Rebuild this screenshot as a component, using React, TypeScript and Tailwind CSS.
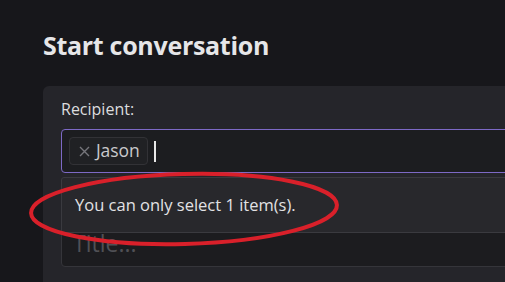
import React from "react";

export default function App() {
  return (
    <div
      className="relative w-[505px] h-[282px] overflow-hidden bg-[#17171b]"
      style={{ fontFamily: '"Open Sans", "Noto Sans", sans-serif' }}
    >
      <div className="pl-[43px] pt-[28px]">
        <h1 className="text-[25px] leading-[34px] font-bold text-[#e6e6e8] tracking-[-0.3px]">
          Start conversation
        </h1>
        <div className="mt-[24px] w-[600px] h-[200px] rounded-tl-[6px] bg-[#25252a] pl-[18px] pt-[11px]">
          <div className="text-[16px] leading-[24px] text-[#dcdcde]">Recipient:</div>
          <div className="relative mt-[8px]">
            <div className="h-[44px] rounded-[4px] border border-[#7d69c6] bg-[#1c1d20] flex items-center pl-[7px] gap-[6px]">
              <div className="h-[28px] rounded-[4px] border border-[#323236] bg-[#202124] flex items-center pl-[9px] pr-[7px] gap-[6px]">
                <svg width="11" height="11" viewBox="0 0 11 11" className="mt-[1px]">
                  <path d="M1 1 L10 10 M10 1 L1 10" stroke="#76767c" strokeWidth="1.4" />
                </svg>
                <span className="text-[17.5px] leading-none text-[#c9c9cc] tracking-[-0.1px]">Jason</span>
              </div>
              <div className="w-[2px] h-[21px] bg-[#e8e8e8]" />
            </div>
            <div className="mt-[45px] h-[49px] rounded-[4px] border border-[#35353a] bg-[#1c1c1f] pl-[11px] pt-[13px]">
              <span className="text-[23px] leading-none text-[#505055]">Title...</span>
            </div>
            <div className="absolute left-0 top-[48px] w-[560px] h-[56px] bg-[#28282c] border border-[#3a3a3f] rounded-[3px] flex items-center pl-[13px]">
              <span className="text-[16.5px] text-[#e2e2e4]">You can only select 1 item(s).</span>
            </div>
          </div>
        </div>
      </div>
      <svg className="absolute left-0 top-0" width="505" height="282" viewBox="0 0 505 282">
        <ellipse
          cx="184"
          cy="209"
          rx="153"
          ry="35"
          fill="none"
          stroke="#d9202a"
          strokeWidth="4"
          transform="rotate(-1.5 184 209)"
        />
      </svg>
    </div>
  );
}
